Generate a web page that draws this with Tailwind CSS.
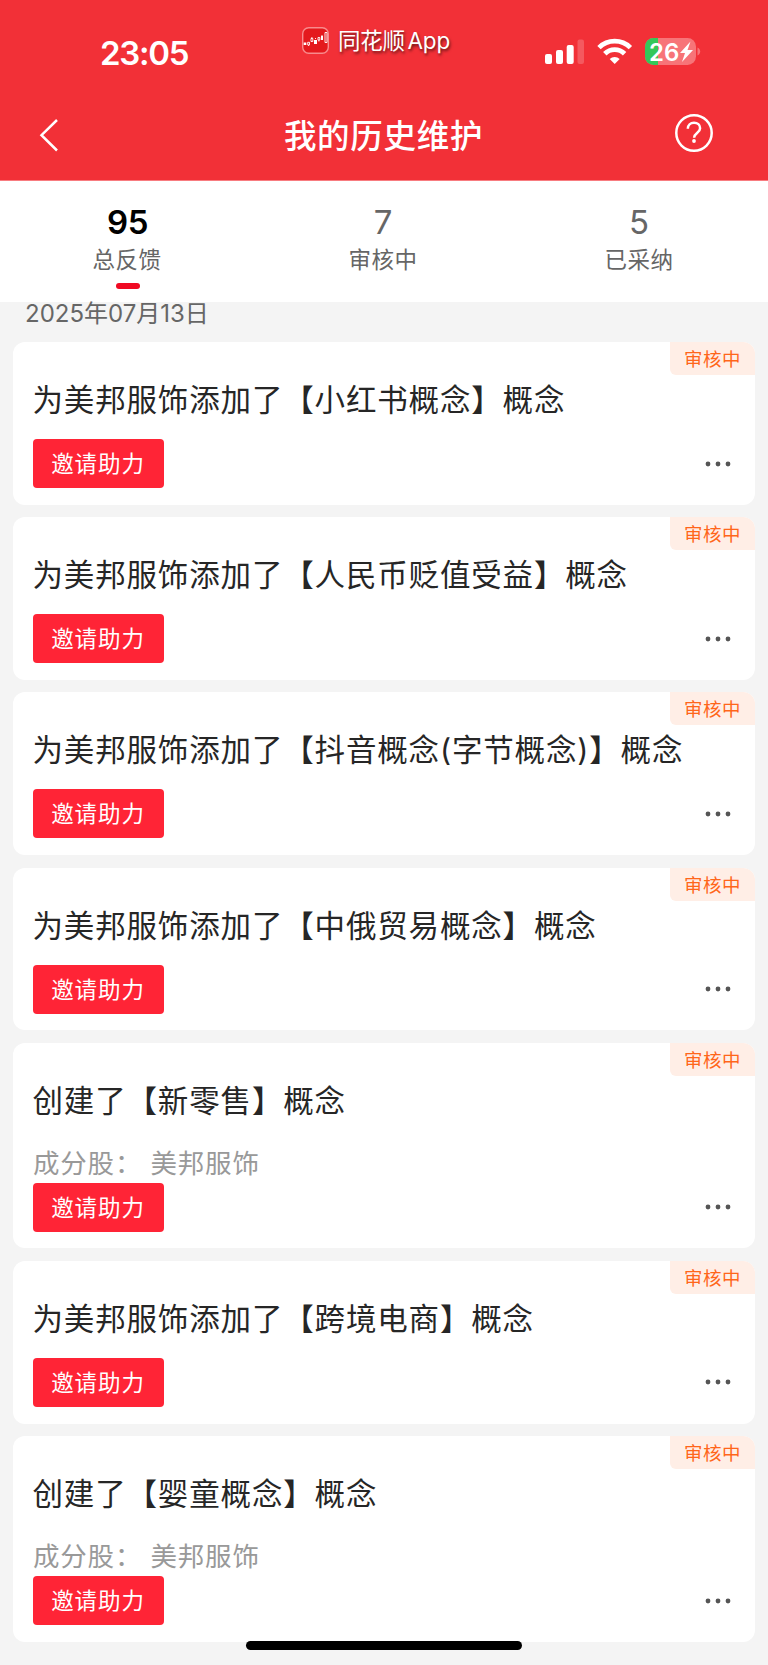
<!DOCTYPE html>
<html lang="zh-CN">
<head>
    <meta charset="UTF-8">
    <meta name="viewport" content="width=device-width, initial-scale=1.0">
    <title>我的历史维护</title>
    <script src="https://cdn.jsdelivr.net/npm/@tailwindcss/browser@4"></script>
</head>
<body class="relative h-[1665px] overflow-hidden bg-[#f4f4f4] font-['Inter','Noto_Sans_CJK_SC',sans-serif]">
<header class="h-[181px] bg-[#f23037] border-b border-[#f87c80] text-white">
    <!-- status bar -->
    <div class="grid grid-cols-[302px_1fr_auto] h-[90px] pr-[67px]">
        <div class="pl-[100px] pt-[32px] text-[33px] leading-[42px] font-semibold tracking-[-1.3px]">23:05</div>
        <div class="flex items-center gap-[9px] h-[40px] mt-[20px]">
            <svg class="w-[27px] h-[27px]" viewBox="0 0 27 27" fill="none">
                <rect x=".7" y=".7" width="25.6" height="25.6" rx="6" fill="#e4191d" stroke="#f88a8c" stroke-width="1.4"/>
                <path d="M1.7 15.5h2.6v2.6H1.7zM12 13h3v4h-3zM19 9h2v4h-2z" fill="#fff"/>
                <path d="M5.7 15.3h1.8v2.6H5.7zM9 11.5h1.8v3H9zM16 10.5h1.8v2.5H16zM23 5.5h2v10h-2zM6.6 18v1M9.9 10v1.5M13.5 12v-1M16.9 13v1.5M20 8v1" stroke="#fff" stroke-width=".9"/>
            </svg>
            <span class="text-[22.5px] leading-[30px] pt-[2px] tracking-[-0.2px] whitespace-nowrap [word-spacing:-3.5px] [text-shadow:1px_2px_3px_rgba(0,0,0,0.6)]">同花顺 App</span>
        </div>
        <svg class="w-[156px] h-[28px] mt-[38px]" viewBox="0 0 156 28" fill="#fff">
            <rect x="0" y="16" width="7" height="10" rx="2"/>
            <rect x="11" y="12" width="7" height="14" rx="2"/>
            <rect x="21.7" y="7" width="7" height="19" rx="2"/>
            <rect x="32.5" y="1.5" width="6.5" height="24.5" rx="2" opacity=".2"/>
            <g fill="none" stroke="#fff" stroke-width="4.8">
                <path d="M54 9.600a22.500 22.500 0 0 1 31.400 0"/>
                <path d="M59.800 15.700a14 14 0 0 1 19.800 0"/>
            </g>
            <path d="M69.700 26l-5-5a7.500 7.500 0 0 1 10 0z"/>
            <rect x="100" y="0" width="51" height="27" rx="8.5" fill="#f77478"/>
            <path d="M113 0v27h-4.500a8.500 8.500 0 0 1-8.500-8.500v-10A8.500 8.500 0 0 1 108.500 0z" fill="#34c759"/>
            <path d="M152.500 9.500c3.600 1.500 3.600 6.500 0 8z" fill="#f77478"/>
            <text x="104" y="22.500" font-size="24" font-weight="600" font-family="Inter">26</text>
            <path d="M145.500 3.500l-10.500 11.500h5l-3 9 11-12h-5.500z"/>
        </svg>
    </div>
    <!-- title bar -->
    <div class="grid grid-cols-[1fr_auto_1fr] items-center h-[90px] pl-[39px] pr-[54px]">
        <svg class="w-[20px] h-[34px]" viewBox="0 0 20 34" fill="none" stroke="#fff" stroke-width="2.5"><path d="M18 2L2.500 17.200 18 32.500"/></svg>
        <h1 class="pt-[3px] pl-[14px] text-[32.5px] leading-[40px] font-medium tracking-[0.7px]">我的历史维护</h1>
        <svg class="w-[40px] h-[40px] mb-[4px] justify-self-end" viewBox="0 0 40 40" fill="none" stroke="#fff" stroke-width="2.5">
            <circle cx="20" cy="20" r="17.7"/>
            <path d="M13.800 15.800c0-3.800 2.700-6 6.200-6s6.100 2.200 6.100 5.400c0 4.800-6 4.800-6 9.500"/>
            <circle cx="20" cy="28" r="1.9" fill="#fff" stroke="none"/>
        </svg>
    </div>
</header>

<nav class="grid grid-cols-3 h-[120.5px] pt-[20px] bg-white text-center text-[#666]">
    <div>
        <div class="pr-[1px] text-[33px] leading-[42px] font-semibold tracking-[-0.5px] text-black">95</div>
        <div class="pr-[2px] text-[22.5px] leading-[34px] tracking-[0.5px]">总反馈</div>
        <div class="w-[24px] h-[6px] mx-auto mt-[6px] rounded-full bg-[#f00a23]"></div>
    </div>
    <div>
        <div class="pr-[2px] text-[33px] leading-[42px]">7</div>
        <div class="pr-[2px] text-[22.5px] leading-[34px] tracking-[0.5px]">审核中</div>
    </div>
    <div>
        <div class="pr-[2px] text-[33px] leading-[42px]">5</div>
        <div class="pr-[2px] text-[22.5px] leading-[34px] tracking-[0.5px]">已采纳</div>
    </div>
</nav>

<main class="px-[13px]">
    <div class="h-[40.5px] pl-[12px] text-[24px] leading-[23px] text-[#666]">2025年07月13日</div>
    <div id="list" class="flex flex-col gap-[12.5px]"></div>
</main>

<!-- home indicator -->
<div class="absolute left-[246px] top-[1641px] w-[276px] h-[9px] rounded-full bg-black"></div>

<script>
    const records = [
        { title: '为美邦服饰添加了【小红书概念】概念' },
        { title: '为美邦服饰添加了【人民币贬值受益】概念' },
        { title: '为美邦服饰添加了【抖音概念(字节概念)】概念' },
        { title: '为美邦服饰添加了【中俄贸易概念】概念' },
        { title: '创建了【新零售】概念', stock: '美邦服饰' },
        { title: '为美邦服饰添加了【跨境电商】概念' },
        { title: '创建了【婴童概念】概念', stock: '美邦服饰' }
    ];

    document.getElementById('list').innerHTML = records.map(item => `
        <section class="relative rounded-[12px] bg-white pl-[20px] pr-[24px] pt-[36px] pb-[16.7px] overflow-hidden">
            <span class="absolute right-0 top-0 w-[85px] h-[33px] rounded-bl-[6px] bg-[#ffeee6] text-center text-[18.5px] leading-[35px] tracking-[0.5px] text-[#ff661a]">审核中</span>
            <h2 class="h-[45px] -ml-[0.5px] text-[30.5px] leading-[44px] tracking-[0.84px] whitespace-nowrap text-[#262626]">${item.title}</h2>
            ${item.stock ? `<p class="h-[59px] pt-[21px] flex text-[26.5px] leading-[36px] tracking-[0.8px] text-[#999]"><span class="w-[117.5px]">成分股：</span><span>${item.stock}</span></p>` : ''}
            <div class="flex items-center justify-between ${item.stock ? '' : 'pt-[16px]'}">
                <button class="w-[131px] h-[49px] pr-[1px] rounded-[4px] bg-[#ff2436] text-[22.5px] leading-[49px] tracking-[0.9px] text-white">邀请助力</button>
                <svg class="w-[26px] h-[6px]" viewBox="0 0 26 6" fill="#555"><circle cx="3" cy="3" r="2.4"/><circle cx="13" cy="3" r="2.4"/><circle cx="23" cy="3" r="2.4"/></svg>
            </div>
        </section>`).join('');
</script>
</body>
</html>
